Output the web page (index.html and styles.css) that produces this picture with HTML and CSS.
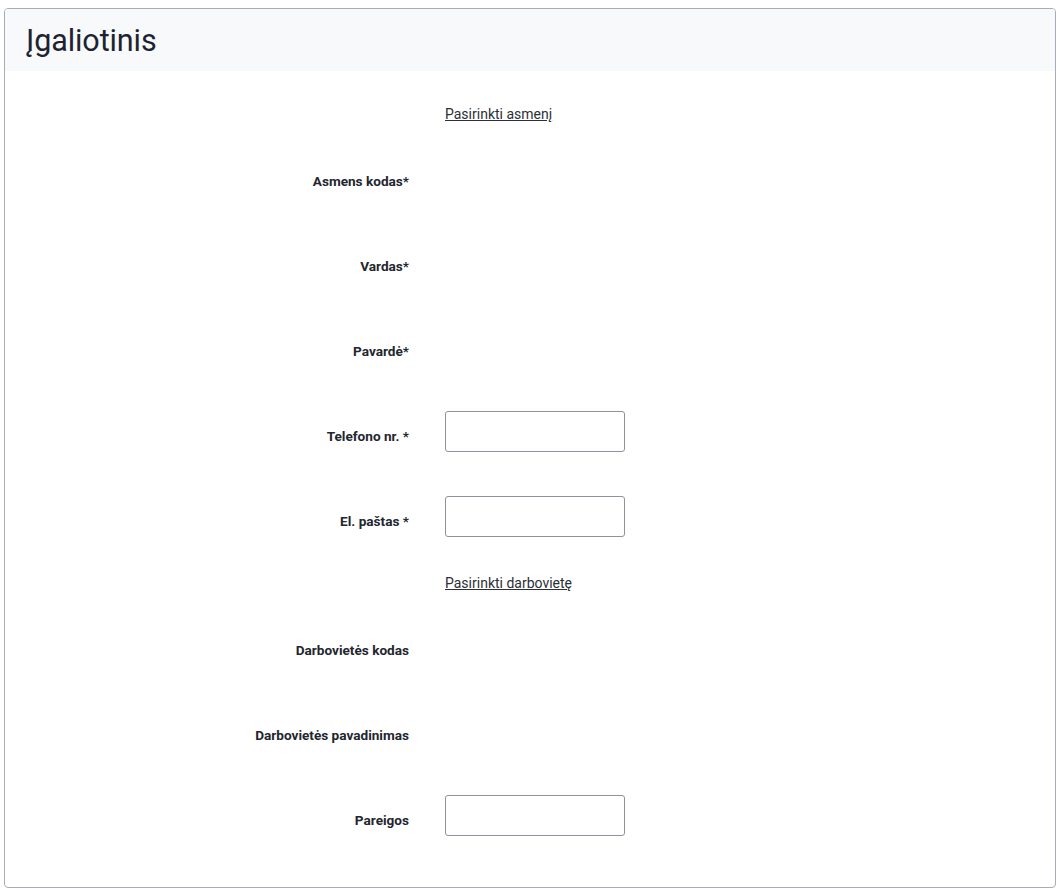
FILE: index.html
```html
<!DOCTYPE html>
<html lang="lt">
<head>
  <meta charset="UTF-8">
  <meta name="viewport" content="width=device-width, initial-scale=1.0">
  <title>Įgaliotinis</title>
  <link rel="stylesheet" href="styles.css">
</head>
<body>
  <div class="card">
    <div class="card-header">
      <h1>Įgaliotinis</h1>
    </div>

    <div class="card-body">
      <!-- Asmuo -->
      <div class="form-row form-row-link">
        <div class="form-label"></div>
        <div class="form-value"><a href="#" class="pick-link">Pasirinkti asmenį</a></div>
      </div>
      <div class="form-row">
        <label class="form-label">Asmens kodas*</label>
        <div class="form-value"></div>
      </div>
      <div class="form-row">
        <label class="form-label">Vardas*</label>
        <div class="form-value"></div>
      </div>
      <div class="form-row">
        <label class="form-label">Pavardė*</label>
        <div class="form-value"></div>
      </div>
      <div class="form-row">
        <label class="form-label" for="phone">Telefono nr. *</label>
        <div class="form-value"><input type="text" id="phone" class="form-input"></div>
      </div>
      <div class="form-row">
        <label class="form-label" for="email">El. paštas *</label>
        <div class="form-value"><input type="text" id="email" class="form-input"></div>
      </div>

      <!-- Darbovietė -->
      <div class="form-row form-row-link">
        <div class="form-label"></div>
        <div class="form-value"><a href="#" class="pick-link">Pasirinkti darbovietę</a></div>
      </div>
      <div class="form-row">
        <label class="form-label">Darbovietės kodas</label>
        <div class="form-value"></div>
      </div>
      <div class="form-row">
        <label class="form-label">Darbovietės pavadinimas</label>
        <div class="form-value"></div>
      </div>
      <div class="form-row">
        <label class="form-label" for="position">Pareigos</label>
        <div class="form-value"><input type="text" id="position" class="form-input"></div>
      </div>
    </div>
  </div>
</body>
</html>
```

FILE: styles.css
```css
body {
  margin: 8px 4px 0;
  font-family: 'Roboto', 'Liberation Sans', sans-serif;
  color: #212529;
  background: #fff;
}

.card {
  border: 1px solid #a9acb8;
  border-radius: 4px;
  height: 880px;
  box-sizing: border-box;
  overflow: hidden;
}

.card-header {
  background-color: #f8f9fb;
  height: 62px;
  padding: 0 21px;
  display: flex;
  align-items: center;
}

.card-header h1 {
  margin: 0;
  font-family: 'Roboto', 'Liberation Sans', sans-serif;
  font-size: 30.5px;
  font-weight: 400;
  color: #1d2330;
  letter-spacing: -0.1px;
}

.card-body {
  display: flex;
  flex-direction: column;
  gap: 32px;
  padding-top: 43px;
}

.form-row {
  display: grid;
  grid-template-columns: 404px 180px;
  column-gap: 36px;
  align-items: start;
  height: 53px;
}

/* link rows sit tighter than the field rows */
.form-row-link {
  height: 24px;
  margin-top: -12px;
  align-items: center;
}

.form-label {
  text-align: right;
  font-size: 13.6px;
  font-weight: 700;
  line-height: 20px;
  padding-top: 13px;
  color: #22262e;
}

.pick-link {
  font-size: 14px;
  color: #2b2f36;
  text-decoration: underline;
  line-height: 24px;
}

.form-input {
  display: block;
  width: 180px;
  height: 41px;
  margin-top: -2px;
  box-sizing: border-box;
  border: 1px solid #8e929b;
  border-radius: 3px;
  padding: 6px 10px;
  font-size: 14px;
  font-family: inherit;
}
```
